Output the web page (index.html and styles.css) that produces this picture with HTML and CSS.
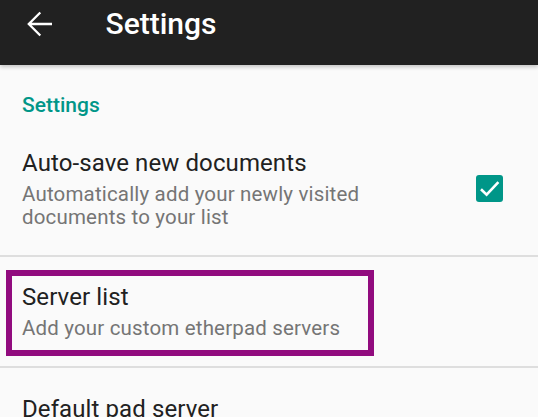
FILE: index.html
```html
<!DOCTYPE html>
<html lang="en">
<head>
<meta charset="utf-8">
<title>Settings</title>
<link rel="stylesheet" href="styles.css">
</head>
<body>
<header class="toolbar">
  <svg class="back" width="26" height="26" viewBox="0 0 26 26" aria-label="Back">
    <path d="M1.8 13H25M13.3 1.5L1.8 13L13.3 24.5" fill="none" stroke="#fff" stroke-width="2.3"/>
  </svg>
  <h1 class="title">Settings</h1>
</header>
<main class="prefs">
  <div class="category">Settings</div>
  <div class="pref">
    <div class="pref-text">
      <div class="pref-title">Auto-save new documents</div>
      <div class="pref-summary">Automatically add your newly visited documents to your list</div>
    </div>
    <div class="checkbox">
      <svg width="27" height="27" viewBox="0 0 27 27"><path d="M5 14.2L10.6 19.6L22.4 7.2" fill="none" stroke="#fff" stroke-width="2.6"/></svg>
    </div>
  </div>
  <div class="pref pref-divided">
    <div class="pref-text">
      <div class="pref-title">Server list</div>
      <div class="pref-summary">Add your custom etherpad servers</div>
    </div>
    <div class="highlight"></div>
  </div>
  <div class="pref pref-divided">
    <div class="pref-text">
      <div class="pref-title">Default pad server</div>
    </div>
  </div>
</main>
</body>
</html>
```
FILE: styles.css
```css
html, body {
  margin: 0;
  padding: 0;
}
body {
  background: #fafafa;
  font-family: Roboto, "Noto Sans", "Liberation Sans", sans-serif;
  width: 538px;
  height: 417px;
  overflow: hidden;
}
.toolbar {
  position: relative;
  z-index: 1;
  box-sizing: border-box;
  height: 65px;
  padding-bottom: 17px;
  background: #212121;
  display: flex;
  align-items: center;
  box-shadow: 0 2px 4px rgba(0, 0, 0, 0.22);
}
.back {
  display: block;
  margin-left: 27px;
  flex: none;
}
.title {
  margin: 0 0 0 52.5px;
  font-size: 30px;
  line-height: 30px;
  font-weight: 500;
  color: #ffffff;
}
.prefs {
  display: flex;
  flex-direction: column;
}
.category {
  padding: 28.3px 22px 5.2px;
  font-size: 21px;
  line-height: 24px;
  font-weight: 500;
  color: #009688;
}
.pref {
  position: relative;
  display: flex;
  align-items: center;
  padding: 26.5px 0 26px 22px;
}
.pref-divided {
  border-top: 2px solid #dedede;
}
.pref-text {
  flex: 1;
  min-width: 0;
}
.pref-title {
  font-size: 24px;
  line-height: 28px;
  letter-spacing: 0.1px;
  color: #212121;
}
.pref-summary {
  margin-top: 6px;
  font-size: 20.5px;
  line-height: 23px;
  letter-spacing: 0.17px;
  color: #757575;
}
.checkbox {
  flex: none;
  width: 27px;
  height: 27px;
  margin: 0 35px 0 37px;
  border-radius: 3px;
  background: #009688;
}
.checkbox svg {
  display: block;
}
.highlight {
  position: absolute;
  left: 6px;
  top: 13px;
  width: 368px;
  height: 86px;
  box-sizing: border-box;
  border: 6px solid #910b7e;
  pointer-events: none;
}
```
